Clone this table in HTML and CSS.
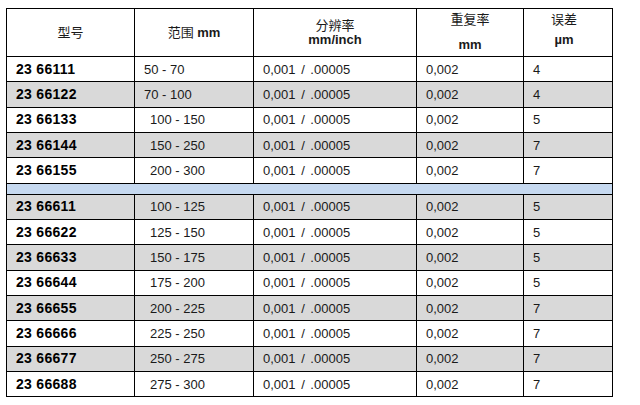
FILE: index.html
```html
<!DOCTYPE html>
<html lang="zh">
<head>
<meta charset="utf-8">
<title>型号</title>
<link rel="stylesheet" href="styles.css">
</head>
<body>
<div class="page">
<table class="spec">
  <colgroup>
    <col class="c1"><col class="c2"><col class="c3"><col class="c4"><col class="c5">
  </colgroup>
  <thead>
    <tr class="head">
      <th>型号</th>
      <th>范围 <b>mm</b></th>
      <th><div class="l1">分辨率</div><div class="l2"><b>mm/inch</b></div></th>
      <th class="top"><div class="l1">重复率</div><div class="l2 gap-lg"><b>mm</b></div></th>
      <th class="top err"><div class="l1">误差</div><div class="l2 gap-sm"><b>µm</b></div></th>
    </tr>
  </thead>
  <tbody>
    <tr><td class="id">23 66111</td><td>50 - 70</td><td class="res">0,001 / .00005</td><td>0,002</td><td>4</td></tr>
    <tr class="alt"><td class="id">23 66122</td><td>70 - 100</td><td class="res">0,001 / .00005</td><td>0,002</td><td>4</td></tr>
    <tr><td class="id">23 66133</td><td class="ind">100 - 150</td><td class="res">0,001 / .00005</td><td>0,002</td><td>5</td></tr>
    <tr class="alt"><td class="id">23 66144</td><td class="ind">150 - 250</td><td class="res">0,001 / .00005</td><td>0,002</td><td>7</td></tr>
    <tr><td class="id">23 66155</td><td class="ind">200 - 300</td><td class="res">0,001 / .00005</td><td>0,002</td><td>7</td></tr>
    <tr class="sep"><td colspan="5"></td></tr>
    <tr class="alt"><td class="id">23 66611</td><td class="ind">100 - 125</td><td class="res">0,001 / .00005</td><td>0,002</td><td>5</td></tr>
    <tr><td class="id">23 66622</td><td class="ind">125 - 150</td><td class="res">0,001 / .00005</td><td>0,002</td><td>5</td></tr>
    <tr class="alt"><td class="id">23 66633</td><td class="ind">150 - 175</td><td class="res">0,001 / .00005</td><td>0,002</td><td>5</td></tr>
    <tr><td class="id">23 66644</td><td class="ind">175 - 200</td><td class="res">0,001 / .00005</td><td>0,002</td><td>5</td></tr>
    <tr class="alt"><td class="id">23 66655</td><td class="ind">200 - 225</td><td class="res">0,001 / .00005</td><td>0,002</td><td>7</td></tr>
    <tr><td class="id">23 66666</td><td class="ind">225 - 250</td><td class="res">0,001 / .00005</td><td>0,002</td><td>7</td></tr>
    <tr class="alt"><td class="id">23 66677</td><td class="ind">250 - 275</td><td class="res">0,001 / .00005</td><td>0,002</td><td>7</td></tr>
    <tr><td class="id">23 66688</td><td class="ind">275 - 300</td><td class="res">0,001 / .00005</td><td>0,002</td><td>7</td></tr>
  </tbody>
</table>
</div>
</body>
</html>
```

FILE: styles.css
```css
html, body {
  margin: 0;
  padding: 0;
  background: #ffffff;
}

.page {
  padding: 8px 0 0 6px;
}

.spec {
  border-collapse: collapse;
  table-layout: fixed;
  width: 606px;
  font-family: "Liberation Sans", "Noto Sans CJK SC", sans-serif;
  font-size: 13px;
  color: #1a1a1a;
}

.c1 { width: 128px; }
.c2 { width: 119px; }
.c3 { width: 163px; }
.c4 { width: 107px; }
.c5 { width: 89px; }

.spec th,
.spec td {
  border: 1px solid #000;
  padding: 0 0 0 9px;
  text-align: left;
  vertical-align: middle;
  white-space: nowrap;
  line-height: 15px;
}

.spec th {
  font-weight: normal;
  text-align: center;
  padding: 0;
  height: 43px;
}

.spec th b {
  font-weight: bold;
}

.spec th .l1,
.spec th .l2 {
  line-height: 14px;
  height: 14px;
}

.spec th.top {
  vertical-align: top;
  padding-top: 4px;
}

.spec th .gap-lg { margin-top: 11px; }
.spec th .gap-sm { margin-top: 6px; }

.spec th.err {
  padding-right: 8px;
}

.spec td {
  height: 24.35px;
}

.spec td.id {
  font-weight: bold;
  font-size: 14px;
  letter-spacing: 0.3px;
  color: #000;
}

.spec td.ind {
  padding-left: 15px;
}

.spec td.res {
  word-spacing: 2px;
}

.spec tr.alt td {
  background: #d9d9d9;
}

.spec tr.sep td {
  background: #c6d9f0;
  height: 10px;
  padding: 0;
}
```
